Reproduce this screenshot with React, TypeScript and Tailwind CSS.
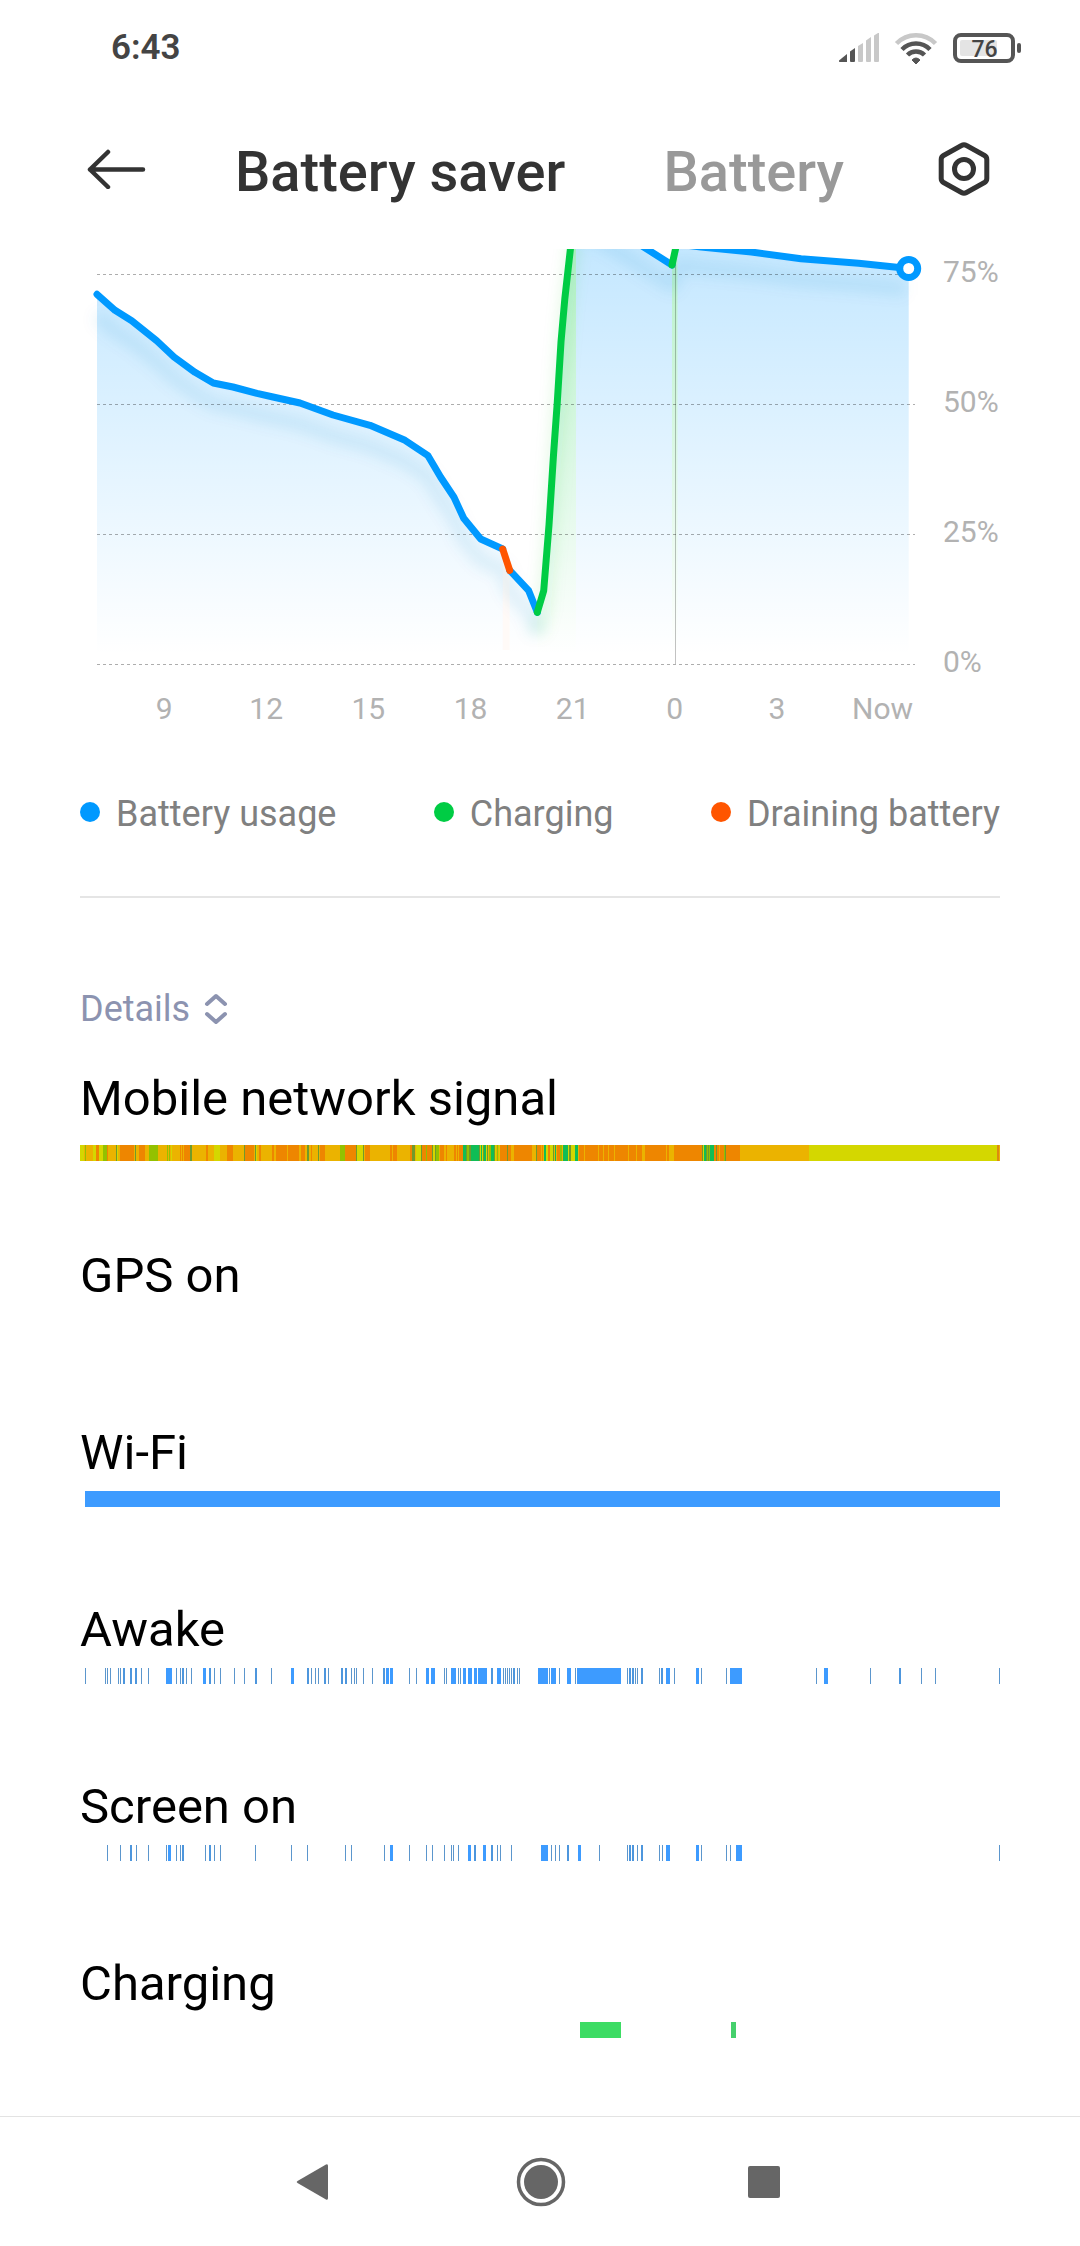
import clsx from 'clsx'

type Segment = [start: number, width: number, color?: string]

const TRACK_LENGTH = 920

const ORANGE = '#ee8600'
const LIME = '#d4d700'
const GREEN = '#93c100'
const TEAL = '#10bd55'
const OLIVE = '#6f9a2c'
const AMBER = '#ebb300'

const signalSegments: Segment[] = [
  [0, 920, AMBER], [0, 4, LIME], [5, 1, GREEN], [13, 3, LIME], [16, 3, ORANGE], [19, 4, LIME], [23, 4, GREEN],
  [27, 1, ORANGE], [36, 1, OLIVE], [37, 1, LIME], [40, 14, ORANGE], [55, 1, OLIVE], [59, 6, ORANGE], [69, 9, GREEN],
  [87, 1, GREEN], [89, 1, GREEN], [91, 1, LIME], [100, 1, ORANGE], [102, 1, ORANGE], [104, 6, ORANGE],
  [110, 2, OLIVE], [126, 2, ORANGE], [134, 6, LIME], [147, 6, ORANGE], [164, 1, OLIVE], [165, 9, ORANGE],
  [175, 1, OLIVE], [176, 1, LIME], [179, 2, ORANGE], [192, 2, ORANGE], [196, 10, ORANGE], [206, 1, ORANGE],
  [208, 11, ORANGE], [221, 4, ORANGE], [227, 2, OLIVE], [231, 1, ORANGE], [238, 1, OLIVE], [240, 5, ORANGE],
  [260, 5, GREEN], [265, 11, ORANGE], [276, 1, OLIVE], [277, 6, LIME], [283, 1, OLIVE], [285, 5, ORANGE],
  [310, 2, ORANGE], [313, 4, ORANGE], [330, 2, ORANGE], [332, 3, OLIVE], [336, 5, LIME], [341, 1, OLIVE],
  [342, 4, ORANGE], [346, 1, GREEN], [347, 5, ORANGE], [352, 1, OLIVE], [353, 2, LIME], [355, 1, OLIVE],
  [356, 3, GREEN], [360, 4, ORANGE], [366, 1, ORANGE], [374, 2, ORANGE], [377, 1, ORANGE], [379, 4, ORANGE],
  [383, 3, TEAL], [386, 1, OLIVE], [387, 2, GREEN], [389, 2, OLIVE], [391, 8, TEAL], [399, 1, OLIVE],
  [400, 1, LIME], [401, 1, TEAL], [402, 1, LIME], [403, 1, OLIVE], [404, 2, TEAL], [406, 1, LIME],
  [407, 1, OLIVE], [409, 2, GREEN], [411, 3, TEAL], [414, 1, OLIVE], [415, 1, LIME], [417, 1, GREEN],
  [419, 1, LIME], [420, 7, ORANGE], [427, 1, OLIVE], [428, 3, ORANGE], [434, 18, ORANGE], [456, 1, OLIVE],
  [457, 4, ORANGE], [462, 1, ORANGE], [464, 2, TEAL], [466, 2, LIME], [468, 2, ORANGE], [470, 3, LIME],
  [473, 1, OLIVE], [475, 1, TEAL], [477, 3, ORANGE], [480, 2, GREEN], [483, 5, TEAL], [488, 1, LIME],
  [489, 2, OLIVE], [491, 4, LIME], [495, 3, TEAL], [499, 123, ORANGE], [504, 1, AMBER], [518, 1, AMBER],
  [523, 1, AMBER], [528, 1, AMBER], [534, 1, AMBER], [548, 1, AMBER], [556, 1, AMBER], [562, 3, AMBER],
  [586, 1, AMBER], [589, 5, AMBER], [622, 1, OLIVE], [623, 1, LIME], [624, 2, TEAL], [626, 1, OLIVE],
  [627, 1, GREEN], [628, 1, OLIVE], [629, 1, GREEN], [630, 4, TEAL], [634, 2, ORANGE], [636, 1, OLIVE],
  [637, 2, ORANGE], [640, 4, ORANGE], [644, 1, GREEN], [645, 1, OLIVE], [646, 14, ORANGE], [729, 188, LIME],
  [917, 2, '#dd8b10'],
]

const wifiSegments: Segment[] = [[5, 915]]

const awakeSegments: Segment[] = [
  [5, 1], [25, 1], [27, 1], [30, 1], [38, 1], [40, 1], [43, 2], [50, 2], [55, 2], [61, 1], [68, 1], [86, 6],
  [96, 1], [100, 1], [102, 2], [106, 1], [111, 1], [123, 3], [129, 2], [134, 1], [140, 1], [154, 1], [164, 1],
  [175, 2], [191, 1], [211, 3], [227, 2], [231, 1], [235, 1], [238, 1], [244, 2], [248, 1], [261, 2], [265, 2],
  [271, 1], [274, 1], [276, 1], [283, 1], [292, 1], [303, 2], [306, 3], [310, 3], [329, 1], [336, 1], [346, 3],
  [351, 4], [364, 1], [366, 1], [371, 5], [378, 1], [380, 1], [383, 3], [388, 4], [394, 3], [398, 9], [411, 2],
  [417, 4], [423, 1], [425, 1], [427, 1], [429, 1], [431, 1], [433, 2], [437, 1], [439, 1], [458, 10], [469, 1],
  [471, 5], [479, 1], [487, 4], [495, 1], [497, 44], [547, 1], [549, 2], [552, 2], [555, 1], [557, 1], [561, 2],
  [579, 1], [581, 2], [586, 4], [594, 1], [616, 3], [621, 1], [646, 1], [650, 12], [736, 1], [744, 4], [790, 1],
  [819, 2], [841, 1], [855, 1], [919, 1],
]

const screenSegments: Segment[] = [
  [27, 1], [40, 1], [50, 2], [56, 1], [68, 1], [86, 1], [88, 3], [96, 1], [100, 1], [102, 2], [125, 1], [129, 2],
  [134, 1], [140, 1], [175, 1], [211, 1], [227, 1], [265, 1], [271, 1], [304, 1], [310, 3], [329, 1], [346, 1],
  [352, 1], [364, 1], [371, 1], [373, 1], [378, 1], [388, 3], [394, 2], [403, 3], [411, 2], [417, 1], [420, 1],
  [431, 1], [461, 7], [471, 1], [475, 1], [479, 1], [487, 2], [498, 3], [519, 1], [547, 1], [549, 2], [552, 2],
  [557, 1], [561, 2], [579, 1], [582, 1], [586, 4], [616, 3], [621, 1], [646, 1], [650, 1], [656, 6], [919, 1],
]

const chargingSegments: Segment[] = [[500, 41, '#3ddc64'], [651, 5, '#45d06c']]

const details: { title: string; segments: Segment[]; roomy?: boolean }[] = [
  { title: 'Mobile network signal', segments: signalSegments, roomy: true },
  { title: 'GPS on', segments: [] },
  { title: 'Wi-Fi', segments: wifiSegments },
  { title: 'Awake', segments: awakeSegments },
  { title: 'Screen on', segments: screenSegments },
  { title: 'Charging', segments: chargingSegments },
]

const legend = [
  { label: 'Battery usage', dot: 'bg-[#0099ff]' },
  { label: 'Charging', dot: 'bg-[#00cc44]' },
  { label: 'Draining battery', dot: 'bg-[#ff5500]' },
]

const hours = ['9', '12', '15', '18', '21', '0', '3']
const percents = ['75%', '50%', '25%', '0%']

// slim marks are drawn slightly darker than the wide ones
function barColor(width: number) {
  if (width === 1) return '#5b96cd'
  if (width === 2) return '#4d96dd'
  return '#3d9bff'
}

function Track({ segments }: { segments: Segment[] }) {
  return (
    <svg
      className="block h-4 w-full"
      viewBox={`0 0 ${TRACK_LENGTH} 16`}
      preserveAspectRatio="none"
      shapeRendering="crispEdges"
      aria-hidden="true"
    >
      {segments.map(([start, width, color], i) => (
        <rect key={i} x={start} width={width} height="16" fill={color ?? barColor(width)} />
      ))}
    </svg>
  )
}

function StatusBar() {
  return (
    <div className="flex h-24 items-center justify-between pr-[58px] pl-[111px]">
      <span className="text-[35px] leading-10 font-semibold text-[#444]">6:43</span>
      <svg className="h-8 w-[184px]" viewBox="838 31 184 32" fill="none" aria-hidden="true">
        <g fill="#555">
          <path d="M839 59.500 847 53v8h-7q-1.500 0-1-1.500z" />
          <path d="M850 50.500 855 47v13q0 1-1 1h-3q-1 0-1-1z" />
        </g>
        <g fill="#c8c8c8">
          <path d="M858 45l5-3v18q0 1-1 1h-3q-1 0-1-1z" />
          <path d="M866 39.500l5-3.500v24q0 1-1 1h-3q-1 0-1-1z" />
          <path d="M874 34.500l4-2.500h1v28q0 1-1 1h-3q-1 0-1-1z" />
        </g>
        <path d="M896.500 42.500a27 27 0 0 1 39 0" stroke="#c8c8c8" strokeWidth="4.500" />
        <path d="M902 48.500a19.500 19.500 0 0 1 28 0" stroke="#555" strokeWidth="4.500" />
        <path d="M907.500 54a12 12 0 0 1 17 0" stroke="#555" strokeWidth="4.500" />
        <path d="M912 59q4-4 8 0l-4 4z" fill="#555" stroke="#555" strokeWidth="1" strokeLinejoin="round" />
        <rect x="955" y="34" width="58" height="26" rx="6" stroke="#555" strokeWidth="4" />
        <rect x="960" y="39" width="37" height="16" rx="2" fill="#e4e4e4" />
        <rect x="1017" y="42" width="4" height="10" rx="2" fill="#555" />
        <text x="984.500" y="56" textAnchor="middle" fill="#444" fontSize="23" fontWeight="500">
          76
        </text>
      </svg>
    </div>
  )
}

function Header() {
  return (
    <header className="flex h-[153px] items-center pr-[90px] pb-2 pl-[86px]">
      <button aria-label="Back" className="w-[60px]">
        <svg className="h-10 w-[60px]" viewBox="86 149 60 40" fill="none" stroke="#333" strokeWidth="4.500" strokeLinecap="round" strokeLinejoin="round">
          <path d="M108 152 90 169.500 108 187M90 169.500H143" />
        </svg>
      </button>
      <nav className="flex flex-1 items-center text-[56px] leading-[66px] font-medium">
        <button className="ml-[89px] pt-1.5 text-[#333]">Battery saver</button>
        <button className="ml-auto pt-1.5 text-[#999]">Battery</button>
      </nav>
      <button aria-label="Settings" className="ml-[94px]">
        <svg className="h-14 w-[52px]" viewBox="938 141 52 56" fill="none" stroke="#333" strokeWidth="5" strokeLinejoin="round">
          <path d="M961.500 145.500q2.500-1.500 5 0l18 10q2.300 1.400 2.300 4v19q0 2.600-2.300 4l-18 10q-2.500 1.500-5 0l-18-10q-2.300-1.400-2.300-4v-19q0-2.600 2.300-4z" />
          <circle cx="964" cy="169" r="9.500" />
        </svg>
      </button>
    </header>
  )
}

const firstLine =
  'M97 294.300 115 310.300 131.700 320.700 156.700 340.700 174 357 195 372.300 213.300 383 233 387 257 393.300 273 397 300 403 333 415 370 425.300 405 440.300 428 455.700 440.700 477.300 454 497.300 463.700 518.300 480.700 539 502.700 549'
const drainLine = 'M502.700 549 509.700 570.300'
const lowLine = 'M509.700 570.300 528.700 590.700 537.300 612.300'
const chargeLine =
  'M537.300 612.300 543.700 590.700 549 525 553.500 455 557.300 402 561 342 564.800 299 570.400 249 576 205'
const highLine = 'M576 205 620 232 672 265'
const topUpLine = 'M672 265 677.500 240'
const lastLine = 'M677.500 244 701 247 751.400 252 801 258.700 858.600 263.300 908.700 268.500'

// y 664.5 is 0 %, y 274.5 is 75 %
function BatteryChart() {
  return (
    <svg
      className="block h-[431px] min-w-0 flex-1"
      viewBox="80 249 863 431"
      preserveAspectRatio="none"
      fill="none"
      role="img"
      aria-label="Battery level"
    >
      <defs>
        <linearGradient id="blueArea" gradientUnits="userSpaceOnUse" x1="0" y1="144" x2="0" y2="655">
          <stop offset="0" stopColor="#0099ff" stopOpacity="0.29" />
          <stop offset="1" stopColor="#0099ff" stopOpacity="0" />
        </linearGradient>
        <linearGradient id="greenArea" gradientUnits="userSpaceOnUse" x1="0" y1="144" x2="0" y2="655">
          <stop offset="0" stopColor="#00cc44" stopOpacity="0.36" />
          <stop offset="1" stopColor="#00cc44" stopOpacity="0" />
        </linearGradient>
        <filter id="soften" filterUnits="userSpaceOnUse" x="60" y="180" width="900" height="520">
          <feGaussianBlur stdDeviation="7" />
        </filter>
      </defs>

      <path d={`${firstLine}V664H97z`} fill="url(#blueArea)" />
      <path d="M502.700 549 509.700 570.300V650H502.700z" fill="#ff5500" fillOpacity="0.03" />
      <path d={`${lowLine}V664H509.700z`} fill="url(#blueArea)" />
      <path d={`${chargeLine}V664H537.300z`} fill="url(#greenArea)" />
      <path d={`${highLine}V664H576z`} fill="url(#blueArea)" />
      <path d="M672 265 677.500 240V664H672z" fill="url(#greenArea)" />
      <path d={`${lastLine}V664H677.500z`} fill="url(#blueArea)" />

      <g filter="url(#soften)" strokeWidth="13" strokeLinejoin="round" strokeOpacity="0.11" transform="translate(0 21)">
        <path d={`${firstLine}L509.700 570.300 528.700 590.700 537.300 612.300`} stroke="#0080c0" />
        <path d={chargeLine} stroke="#00cc44" />
        <path d={`${highLine}L680 244 701 247 751.400 252 801 258.700 858.600 263.300 905 268`} stroke="#0080c0" />
      </g>

      <path d="M97 274.500H915M97 404.500H915M97 534.500H915M97 664.500H915" stroke="#000" strokeOpacity="0.32" strokeDasharray="3 3" />
      <path d="M675.500 249V664" stroke="#000" strokeOpacity="0.24" />

      <g strokeWidth="7" strokeLinecap="round" strokeLinejoin="round">
        <path d={`${firstLine}${lowLine}`} stroke="#0099ff" />
        <path d={drainLine} stroke="#ff5500" />
        <path d={`${highLine}${lastLine}`} stroke="#0099ff" />
        <path d={`${chargeLine}${topUpLine}`} stroke="#00cc44" />
      </g>
      <circle cx="908.700" cy="268.500" r="9" fill="#fff" stroke="#0099ff" strokeWidth="7" />
    </svg>
  )
}

function ChartSection() {
  return (
    <section>
      <div className="flex">
        <BatteryChart />
        <ul className="flex w-[57px] flex-col gap-[85px] text-[30px] leading-[45px] text-[#b2b2b2]">
          {percents.map((label) => (
            <li key={label}>{label}</li>
          ))}
        </ul>
      </div>
      <div className="flex pt-0.5 pr-[87px] pl-[33px] text-center text-[30px] leading-[45px] text-[#b2b2b2]">
        {hours.map((hour) => (
          <span key={hour} className="flex-1">
            {hour}
          </span>
        ))}
        <span className="pl-6">Now</span>
      </div>
      <ul className="mt-[60px] flex justify-between border-b-2 border-[#e5e5e5] pb-[59px] text-[36px] leading-[46px] text-[#808080]">
        {legend.map((item) => (
          <li key={item.label} className="flex items-center">
            <span className={clsx('mr-4 mb-1 size-5 rounded-full', item.dot)} />
            {item.label}
          </li>
        ))}
      </ul>
    </section>
  )
}

export default function App() {
  return (
    <div className="flex min-h-screen flex-col bg-white font-[Roboto,sans-serif]">
      <StatusBar />
      <Header />
      <main className="flex-1 px-20">
        <ChartSection />
        <button className="mt-[88px] flex items-center text-[36px] leading-[46px] text-[#8c93b0]">
          Details
          <svg className="ml-3.5 h-8 w-6" viewBox="0 0 24 32" fill="none" stroke="currentColor" strokeWidth="4" strokeLinecap="round" strokeLinejoin="round">
            <path d="M3 11 12 3 21 11M3 21 12 29 21 21" />
          </svg>
        </button>
        <ul className="mt-[37px]">
          {details.map((row) => (
            <li key={row.title} className="h-[177px] last:h-[140px]">
              <h2 className={clsx('text-[49px] leading-[60px] text-black', row.roomy ? 'pb-4' : 'pb-2')}>
                {row.title}
              </h2>
              <Track segments={row.segments} />
            </li>
          ))}
        </ul>
      </main>
      <footer className="flex h-[130px] items-center justify-center border-t border-[#e3e3e3] pr-[5px]">
        <button aria-label="Back" className="mr-[185px]">
          <svg className="h-10 w-9" viewBox="0 0 36 40" fill="#666">
            <path d="M2.500 19 31 2.500Q33 1.500 33 4V36Q33 38.500 31 37.500L2.500 21Q.8 20 2.500 19z" />
          </svg>
        </button>
        <button aria-label="Home">
          <svg className="size-[50px]" viewBox="0 0 50 50" fill="none">
            <circle cx="25" cy="25" r="22.500" stroke="#666" strokeWidth="3.500" />
            <circle cx="25" cy="25" r="17" fill="#666" />
          </svg>
        </button>
        <button aria-label="Recent apps" className="ml-[182px] size-8 rounded-xs bg-[#666]" />
      </footer>
    </div>
  )
}
